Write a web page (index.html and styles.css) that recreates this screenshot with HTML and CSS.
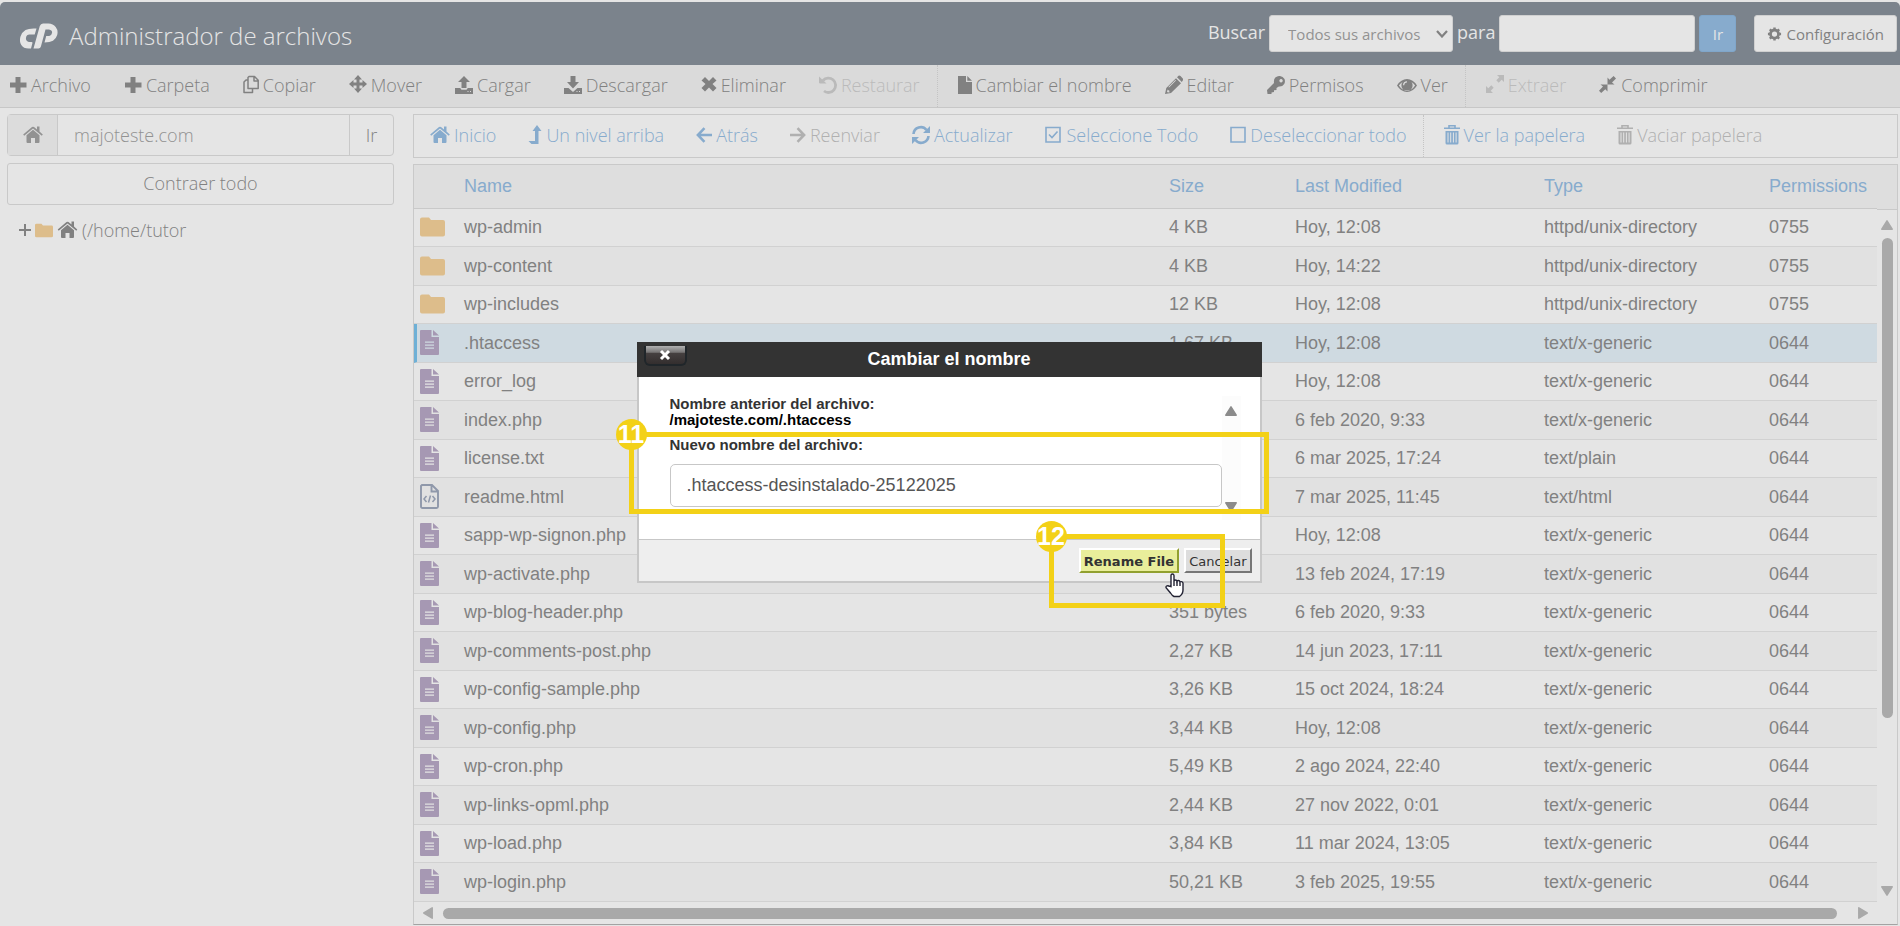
FILE: index.html
```
<!DOCTYPE html>
<html lang="es">
<head>
  <meta charset="UTF-8">
  <meta name="viewport" content="width=device-width, initial-scale=1">
  <title>Administrador de archivos</title>
  <link rel="stylesheet" href="styles.css">
</head>
<body>

  <!-- Iconos compartidos -->
  <svg class="sprite" aria-hidden="true">
    <symbol id="i-plus" viewBox="0 0 18 20"><path d="M6.500 2h5v5.500H17.500v5H11.500V18h-5v-5.500H1v-5h5.500z"/></symbol>
    <symbol id="i-copy" viewBox="0 0 16 20"><path d="M6 1.500h5.500l3.700 3.700V13.500H5V2.500zM11 1.500V6h4.200M5 5H3L1 7v10.500h8.500v-4" fill="none" stroke="currentColor" stroke-width="1.500" stroke-linejoin="round"/></symbol>
    <symbol id="i-move" viewBox="0 0 18 20"><path d="M9 0l4 4.500h-2.500V7.500h3V5L18 9l-4.500 4v-2.500h-3v3H13L9 18l-4-4.500h2.500v-3h-3V13L0 9l4.500-4v2.500h3v-3H5z"/></symbol>
    <symbol id="i-upload" viewBox="0 0 18 20"><path d="M9 1l6 6h-3.500v6h-5V7H3zM0 13h5.200l1.300 1.800h5L12.800 13H18v6H0zM12.500 16v1h1v-1zM15 16v1h1v-1z" fill-rule="evenodd"/></symbol>
    <symbol id="i-download" viewBox="0 0 18 20"><path d="M6.500 1h5v6H15l-6 6.500L3 7h3.500zM0 13h4.500L9 17l4.500-4H18v6H0zM12.500 16v1h1v-1zM15 16v1h1v-1z" fill-rule="evenodd"/></symbol>
    <symbol id="i-times" viewBox="0 0 16 20"><path d="M4 2l4 4 4-4 3.500 3.500L11.500 9l4 4-3.500 3.500-4-4-4 4L.5 13l4-4-4-3.500z"/></symbol>
    <symbol id="i-undo" viewBox="0 0 18 20"><path d="M4 5.500a7.200 7.200 0 1 1 1 10.500" fill="none" stroke="currentColor" stroke-width="2.800"/><path d="M0 1.500l7.500 7H.8L0 7.700z"/></symbol>
    <symbol id="i-file" viewBox="0 0 14 20"><path d="M0 1h8v6h6v12H0zM9.300 1L14 5.700H9.300z"/></symbol>
    <symbol id="i-pencil" viewBox="0 0 18 20"><path d="M0 19l1.300-6L11 3.300l5 5L6 18zM12 2.300l1.500-1.500q1-.6 2 .2l2.300 2.400q.8 1 0 2L16.800 7zM2.600 14l-.6 2.800.9.800 2.800-.7-1.500-.1v-1.500H2.700zM4 12.500l7-7-.6-.5-7 7z" fill-rule="evenodd"/></symbol>
    <symbol id="i-key" viewBox="0 0 18 20"><path d="M8.300 2.500Q10.500.5 13 1q3 .5 4.500 3 1 2.500-.3 5-2 3-5.400 2.500L9.500 13v2L7 15.300V17l-2.500.5V19H.5L0 15l7-7q-.5-3.500 1.300-5.500zM14 4a1.700 1.700 0 1 0 .1 0z" fill-rule="evenodd"/></symbol>
    <symbol id="i-eye" viewBox="0 0 20 20"><path d="M0 10.500Q4 4 10 4t10 6.500Q16 17 10 17T0 10.500zM1.900 10.500Q5 15.400 10 15.400t8.100-4.900Q17 8.500 14.500 7a5.600 5.600 0 1 1-9 0Q3 8.500 1.900 10.500zM10 6.300a4 4 0 0 0-4 3.900h1.300A2.800 2.800 0 0 1 10 7.500z" fill-rule="evenodd"/></symbol>
    <symbol id="i-expand" viewBox="0 0 18 20"><path d="M11 0h7v7l-2.300-2.300-3 3-2.400-2.400 3-3zM0 18v-7l2.300 2.300 3-3 2.400 2.400-3 3L7 18z"/></symbol>
    <symbol id="i-compress" viewBox="0 0 18 20"><path d="M8.500 9.500v-7l2 2.200L14.600 1 17 3.400 13 7.500l2.500 2zM8.500 9.500v7L6.300 14.300 2.200 18 0 15.800l4-4.200-2.500-2.100z"/></symbol>
    <symbol id="i-home" viewBox="0 0 20 20"><path d="M10 4.800l6.500 5.500V17q0 1-1 1H12v-5H8v5H4.500q-1 0-1-1v-6.700zM.2 9.500L9 2q1-.7 2 0l3 2.500V1.500h2.500v5l3.300 3-1 1.200L10 3.500l-8.800 7.200z"/></symbol>
    <symbol id="i-levelup" viewBox="0 0 13 20"><path d="M8.500 0l4.500 6h-3v13H3L0 16h6.500V6H4z"/></symbol>
    <symbol id="i-left" viewBox="0 0 17 20"><path d="M9 2.800L2 10l7 7.200M2 10h15" fill="none" stroke="currentColor" stroke-width="2.700"/></symbol>
    <symbol id="i-right" viewBox="0 0 17 20"><path d="M8 2.800L15 10l-7 7.200M15 10H0" fill="none" stroke="currentColor" stroke-width="2.700"/></symbol>
    <symbol id="i-refresh" viewBox="0 0 18 20"><path d="M1.500 9A7.300 7.300 0 0 1 14.500 5M16.500 11A7.300 7.300 0 0 1 3.500 15" fill="none" stroke="currentColor" stroke-width="2.600"/><path d="M18 1v7h-7zM0 19v-7h7z"/></symbol>
    <symbol id="i-checked" viewBox="0 0 16 20"><path d="M1 2.500h14v14.500H1zM4 9.500l3 3 5.500-6" fill="none" stroke="currentColor" stroke-width="1.600"/></symbol>
    <symbol id="i-unchecked" viewBox="0 0 16 20"><path d="M1 2.500h14v14.500H1z" fill="none" stroke="currentColor" stroke-width="1.600"/></symbol>
    <symbol id="i-trash" viewBox="0 0 16 20"><path d="M5 3V.8h6V3M0 3.300h16" fill="none" stroke="currentColor" stroke-width="1.600"/><path d="M1.500 6h13v12q0 1.500-1.500 1.500H3q-1.500 0-1.500-1.500zM3.500 7.500v10h1v-10zM6.200 7.500v10h1v-10zM8.900 7.500v10h1v-10zM11.600 7.500v10h1v-10z" fill-rule="evenodd"/></symbol>
    <symbol id="i-cog" viewBox="0 0 16 16"><circle cx="8" cy="8" r="4.300" fill="none" stroke="currentColor" stroke-width="3"/><path d="M8 1v2M8 13v2M1 8h2M13 8h2M3 3l1.500 1.500M11.500 11.500L13 13M13 3l-1.500 1.500M4.500 11.500L3 13" stroke="currentColor" stroke-width="2.600"/></symbol>
    <symbol id="i-folder" viewBox="0 0 25 20"><path d="M0 2.500Q0 .5 2 .5h7l2 2.500h12q2 0 2 2v12.500q0 2-2 2H2q-2 0-2-2z"/></symbol>
    <symbol id="i-doc" viewBox="0 0 19 25"><path d="M1 0h10.500v7H19v17q0 1-1 1H1q-1 0-1-1V1q0-1 1-1zM13 0l6 5.500h-6zM5 11.500v1.300h9v-1.300zM5 14.500v1.300h9v-1.300zM5 17.500v1.300h9v-1.300z" fill-rule="evenodd"/></symbol>
    <symbol id="i-html" viewBox="0 0 19 25"><path d="M2 1h10l6 6v15.500q0 1.500-1.500 1.500h-14Q1 24 1 22.500V2zM11.500 1v6.500H18" fill="none" stroke="currentColor" stroke-width="1.900"/><path d="M6.500 12L4 15l2.500 3M12.500 12l2.500 3-2.500 3M10.500 11.500l-2 7" fill="none" stroke="currentColor" stroke-width="1.500"/></symbol>
    <symbol id="i-tri" viewBox="0 0 12 10"><path d="M6 .8L11.200 9.200H.8z" stroke="currentColor" stroke-width="1.500" stroke-linejoin="round"/></symbol>
  </svg>

  <header class="topbar">
    <svg class="logo" viewBox="0 0 38 26" role="img" aria-label="cPanel">
      <path d="M16.500 5.500L14.700 11.500H9.500q-3 0-3.500 3.300T9 19h2.500q1.300 0 .9 1.200L11 25.500H8.500Q3.500 25.500 1.300 22T.5 13.500Q2 9 5.500 7t11-1.500z"/>
      <path d="M13.500 25.500L19.800 3Q20.700.5 23 .5h5.500Q33 .5 35.700 4t1.500 8q-1.200 4-4.200 5.700t-8.500 1.800L26.200 13h3q2.300-.2 2.800-3t-3-3.500h-3.500l-4.600 17q-.6 2-2.400 2z"/>
    </svg>
    <h1 class="title">Administrador de archivos</h1>
    <form class="search">
      <label for="search-scope">Buscar</label>
      <span class="select-wrap">
        <select id="search-scope">
          <option>Todos sus archivos</option>
        </select>
        <svg class="chevron" viewBox="0 0 12 8"><path d="M1 1l5 5.500L11 1" fill="none" stroke="currentColor" stroke-width="2.200"/></svg>
      </span>
      <label for="search-text">para</label>
      <input type="text" id="search-text">
      <button type="button" class="btn-go">Ir</button>
      <button type="button" class="btn-config"><svg class="icon-cog"><use href="#i-cog"/></svg>Configuración</button>
    </form>
  </header>

  <nav class="toolbar main-toolbar">
    <a href="#"><svg class="icon"><use href="#i-plus"/></svg>Archivo</a>
    <a href="#"><svg class="icon"><use href="#i-plus"/></svg>Carpeta</a>
    <a href="#"><svg class="icon icon-s"><use href="#i-copy"/></svg>Copiar</a>
    <a href="#"><svg class="icon"><use href="#i-move"/></svg>Mover</a>
    <a href="#"><svg class="icon"><use href="#i-upload"/></svg>Cargar</a>
    <a href="#"><svg class="icon"><use href="#i-download"/></svg>Descargar</a>
    <a href="#"><svg class="icon icon-s"><use href="#i-times"/></svg>Eliminar</a>
    <a href="#" class="disabled"><svg class="icon"><use href="#i-undo"/></svg>Restaurar</a>
    <a href="#" class="group"><svg class="icon icon-xs"><use href="#i-file"/></svg>Cambiar el nombre</a>
    <a href="#"><svg class="icon"><use href="#i-pencil"/></svg>Editar</a>
    <a href="#"><svg class="icon"><use href="#i-key"/></svg>Permisos</a>
    <a href="#"><svg class="icon icon-l"><use href="#i-eye"/></svg>Ver</a>
    <a href="#" class="group disabled"><svg class="icon"><use href="#i-expand"/></svg>Extraer</a>
    <a href="#"><svg class="icon"><use href="#i-compress"/></svg>Comprimir</a>
  </nav>

  <main class="content">
    <aside class="sidebar">
      <form class="path">
        <label for="path-input" class="path-home"><svg class="icon icon-l"><use href="#i-home"/></svg></label>
        <input type="text" id="path-input" value="majoteste.com">
        <button type="button">Ir</button>
      </form>
      <button type="button" class="btn-collapse">Contraer todo</button>
      <div class="tree">
        <svg class="tree-plus" viewBox="0 0 12 12"><path d="M6 0v12M0 6h12" stroke="currentColor" stroke-width="2"/></svg>
        <svg class="tree-folder"><use href="#i-folder"/></svg>
        <svg class="tree-home"><use href="#i-home"/></svg>
        <a href="#">(/home/tutor</a>
      </div>
    </aside>

    <section class="files">
      <nav class="toolbar nav-toolbar">
        <a href="#"><svg class="icon icon-l"><use href="#i-home"/></svg>Inicio</a>
        <a href="#"><svg class="icon icon-xs"><use href="#i-levelup"/></svg>Un nivel arriba</a>
        <a href="#"><svg class="icon icon-s"><use href="#i-left"/></svg>Atrás</a>
        <a href="#" class="disabled"><svg class="icon icon-s"><use href="#i-right"/></svg>Reenviar</a>
        <a href="#"><svg class="icon"><use href="#i-refresh"/></svg>Actualizar</a>
        <a href="#"><svg class="icon"><use href="#i-checked"/></svg>Seleccione Todo</a>
        <a href="#"><svg class="icon icon-s"><use href="#i-unchecked"/></svg>Deseleccionar todo</a>
        <a href="#" class="group"><svg class="icon icon-s"><use href="#i-trash"/></svg>Ver la papelera</a>
        <a href="#" class="disabled"><svg class="icon icon-s"><use href="#i-trash"/></svg>Vaciar papelera</a>
      </nav>

      <div class="list">
        <div class="list-main">
          <table>
            <colgroup>
              <col class="col-icon"><col><col class="col-size"><col class="col-date"><col class="col-type"><col class="col-perm">
            </colgroup>
            <thead>
              <tr><th></th><th>Name</th><th>Size</th><th>Last Modified</th><th>Type</th><th>Permissions</th></tr>
            </thead>
            <tbody id="file-rows"></tbody>
          </table>
          <div class="scroll-y">
            <svg class="arrow"><use href="#i-tri"/></svg>
            <div class="track-y"><div class="thumb-y"></div></div>
            <svg class="arrow down"><use href="#i-tri"/></svg>
          </div>
        </div>
        <div class="scroll-x">
          <svg class="arrow left"><use href="#i-tri"/></svg>
          <div class="thumb-x"></div>
          <svg class="arrow right"><use href="#i-tri"/></svg>
        </div>
      </div>
    </section>
  </main>

  <!-- Ventana para cambiar el nombre -->
  <div class="overlay">
    <div class="dialog" role="dialog" aria-labelledby="dialog-title">
      <div class="dialog-header">
        <button type="button" class="dialog-close" aria-label="Cerrar"><svg viewBox="0 0 12 12"><path d="M2 2l8 8M10 2l-8 8" stroke="currentColor" stroke-width="3"/></svg></button>
        <h2 id="dialog-title">Cambiar el nombre</h2>
      </div>
      <div class="dialog-body">
        <div class="dialog-form">
          <p>Nombre anterior del archivo:</p>
          <p class="old-name">/majoteste.com/.htaccess</p>
          <label for="new-name">Nuevo nombre del archivo:</label>
          <input type="text" id="new-name" value=".htaccess-desinstalado-25122025">
        </div>
        <div class="dialog-scroll">
          <svg class="arrow"><use href="#i-tri"/></svg>
          <svg class="arrow down"><use href="#i-tri"/></svg>
        </div>
      </div>
      <div class="dialog-footer">
        <button type="button" class="btn-rename">Rename File</button>
        <button type="button" class="btn-cancel">Cancelar</button>
      </div>

      <!-- Pasos de la guía -->
      <div class="mark mark-11"><span class="step">11</span></div>
      <div class="mark mark-12"><span class="step">12</span></div>
      <svg class="cursor" viewBox="0 0 19 25"><path d="M6 13.500V2.500Q6 1 7.400 1T9 2.500V8q.3-1 1.500-1T12 8.300q.3-.8 1.500-.8T15 9q.4-.5 1.400-.4T18 10v7q0 4-3.500 6.500H9Q7 22.500 5.500 20L1.200 15q-.6-1.400.4-2t2.200 0z" fill="#fff" stroke="#223" stroke-width="1.400"/><path d="M9 8v5M12 8.500V13M15 9.500V13" stroke="#223" stroke-width="1.400"/></svg>
    </div>
  </div>

  <script>
    // [icono, nombre, tamaño, modificado, tipo, permisos]
    const files = [
      ['folder', 'wp-admin', '4 KB', 'Hoy, 12:08', 'httpd/unix-directory', '0755'],
      ['folder', 'wp-content', '4 KB', 'Hoy, 14:22', 'httpd/unix-directory', '0755'],
      ['folder', 'wp-includes', '12 KB', 'Hoy, 12:08', 'httpd/unix-directory', '0755'],
      ['doc', '.htaccess', '1,67 KB', 'Hoy, 12:08', 'text/x-generic', '0644'],
      ['doc', 'error_log', '', 'Hoy, 12:08', 'text/x-generic', '0644'],
      ['doc', 'index.php', '', '6 feb 2020, 9:33', 'text/x-generic', '0644'],
      ['doc', 'license.txt', '', '6 mar 2025, 17:24', 'text/plain', '0644'],
      ['html', 'readme.html', '', '7 mar 2025, 11:45', 'text/html', '0644'],
      ['doc', 'sapp-wp-signon.php', '', 'Hoy, 12:08', 'text/x-generic', '0644'],
      ['doc', 'wp-activate.php', '', '13 feb 2024, 17:19', 'text/x-generic', '0644'],
      ['doc', 'wp-blog-header.php', '351 bytes', '6 feb 2020, 9:33', 'text/x-generic', '0644'],
      ['doc', 'wp-comments-post.php', '2,27 KB', '14 jun 2023, 17:11', 'text/x-generic', '0644'],
      ['doc', 'wp-config-sample.php', '3,26 KB', '15 oct 2024, 18:24', 'text/x-generic', '0644'],
      ['doc', 'wp-config.php', '3,44 KB', 'Hoy, 12:08', 'text/x-generic', '0644'],
      ['doc', 'wp-cron.php', '5,49 KB', '2 ago 2024, 22:40', 'text/x-generic', '0644'],
      ['doc', 'wp-links-opml.php', '2,44 KB', '27 nov 2022, 0:01', 'text/x-generic', '0644'],
      ['doc', 'wp-load.php', '3,84 KB', '11 mar 2024, 13:05', 'text/x-generic', '0644'],
      ['doc', 'wp-login.php', '50,21 KB', '3 feb 2025, 19:55', 'text/x-generic', '0644'],
    ];
    const selected = '.htaccess';

    document.getElementById('file-rows').innerHTML = files.map(([icon, name, ...cells]) => `
      <tr class="${name === selected ? 'selected' : ''}">
        <td><svg class="type-${icon}"><use href="#i-${icon}"/></svg></td>
        <td>${name}</td>
        ${cells.map(cell => `<td>${cell}</td>`).join('')}
      </tr>`).join('');
  </script>

</body>
</html>
```

FILE: styles.css
```
* {
  box-sizing: border-box;
}

body {
  margin: 0;
  min-height: 100vh;
  padding-top: 2px;
  background-color: #e5e5e5;
  color: #818181;
  font-family: "Open Sans", sans-serif;
  font-size: 18px;
  line-height: 24px;
}

h1, h2, p {
  margin: 0;
}

svg {
  fill: currentColor;
}

button, input, select {
  margin: 0;
  color: inherit;
  font: inherit;
}

a {
  color: inherit;
  text-decoration: none;
}

.sprite {
  display: none;
}

/* Cabecera */
.topbar {
  display: flex;
  align-items: center;
  height: 63px;
  padding: 0 3px 0 20px;
  background-color: #7b838c;
  color: #e5e5e5;
  border-radius: 5px 5px 0 0;
}

.logo {
  width: 38px;
  height: 26px;
  margin-top: 4px;
}

.title {
  flex: 1;
  padding: 4px 0 0 11px;
  font-size: 24px;
  font-weight: 300;
}

.search {
  display: flex;
  align-items: center;
  gap: 4px;
}

.search label {
  padding-bottom: 4px;
}

.search select,
.search input,
.search button {
  height: 37px;
  border: 1px solid #d0d0d0;
  border-radius: 3px;
  background-color: #e5e5e5;
  color: #818181;
  font-size: 15px;
}

.select-wrap {
  position: relative;
}

.search select {
  display: block;
  width: 184px;
  padding: 0 18px;
  appearance: none;
  color: #929292;
}

.chevron {
  position: absolute;
  right: 5px;
  top: 15px;
  width: 12px;
  height: 8px;
  color: #818181;
}

.search input {
  width: 196px;
}

.search .btn-go {
  width: 37px;
  padding: 0;
  background-color: #87abcd;
  border-color: #80a6ca;
  color: #e5e5e5;
}

.search .btn-config {
  display: flex;
  align-items: center;
  gap: 4px;
  margin-left: 14px;
  padding: 0 12px;
}

.icon-cog {
  width: 15px;
  height: 16px;
}

/* Barras de herramientas */
.toolbar {
  display: flex;
  font-weight: 300;
  white-space: nowrap;
}

.toolbar a {
  display: flex;
  align-items: center;
  gap: 4px;
  padding: 0 16px 2px;
}

.toolbar .group {
  border-left: 1px dotted #c4c4c4;
  padding-left: 20px;
}

.icon {
  width: 18px;
  height: 20px;
}

.icon-xs {
  width: 14px;
}

.icon-s {
  width: 16px;
}

.icon-l {
  width: 20px;
}

.main-toolbar {
  gap: 1px;
  height: 43px;
  background-color: #dadada;
  border-bottom: 1px solid #c7c7c7;
}

.main-toolbar a:first-child {
  padding-left: 9px;
}

.main-toolbar .disabled {
  color: #bababa;
}

.nav-toolbar {
  height: 44px;
  border: 1px solid #c9c9c9;
  color: #87abcd;
}

.nav-toolbar .disabled {
  color: #b0b0b0;
}

/* Contenido */
.content {
  display: flex;
  align-items: flex-start;
  gap: 19px;
  padding: 6px 2px 0 7px;
}

.sidebar {
  width: 387px;
}

.path {
  display: flex;
  height: 42px;
  border: 1px solid #c9c9c9;
  border-radius: 4px;
}

.path-home {
  display: flex;
  align-items: center;
  justify-content: center;
  width: 50px;
  background-color: #dcdcdc;
  color: #929292;
  border-right: 1px solid #c9c9c9;
}

.path input {
  flex: 1;
  min-width: 0;
  padding: 0 16px;
  border: 0;
  background: none;
  color: #929292;
  font-weight: 300;
}

.path button {
  width: 44px;
  border: 0;
  border-left: 1px solid #c9c9c9;
  background: none;
  font-weight: 300;
}

.btn-collapse {
  display: block;
  width: 100%;
  height: 42px;
  margin-top: 7px;
  padding-bottom: 3px;
  border: 1px solid #c9c9c9;
  border-radius: 3px;
  background: none;
  font-weight: 300;
}

.tree {
  display: flex;
  align-items: center;
  gap: 4px;
  padding: 13px 12px;
  font-weight: 300;
}

.tree-plus {
  width: 12px;
  height: 12px;
}

.tree-folder {
  width: 18px;
  height: 15px;
  color: #ddbd8b;
}

.tree-home {
  width: 21px;
  height: 20px;
}

.files {
  flex: 1;
  min-width: 0;
}

/* Lista de archivos */
.list {
  margin-top: 6px;
  border: 1px solid #c9c9c9;
  border-bottom-color: #a3a3a3;
  font-family: "Liberation Sans", Arial, sans-serif;
}

.list-main {
  display: flex;
}

table {
  flex: 1;
  border-collapse: separate;
  border-spacing: 0;
  table-layout: fixed;
  width: 0;
  line-height: 20px;
}

th, td {
  padding: 0;
  text-align: left;
  vertical-align: middle;
  white-space: nowrap;
}

th {
  height: 44px;
  padding-bottom: 2px;
  background-color: #dedede;
  border-bottom: 1px solid #c9c9c9;
  color: #87abcd;
  font-weight: 400;
}

td {
  height: 38px;
  padding-bottom: 1px;
  border-bottom: 1px solid #d1d1d1;
}

td:first-child {
  padding-left: 6px;
}

tbody tr:nth-child(even) td {
  height: 39px;
  background-color: #e1e1e1;
}

tbody tr.selected td {
  background-color: #cfdae1;
}

tbody tr.selected td:first-child {
  border-left: 3px solid #6eb0d6;
  padding-left: 3px;
}

td svg {
  display: block;
}

.col-icon {
  width: 50px;
}

.col-size {
  width: 126px;
}

.col-date {
  width: 249px;
}

.col-type {
  width: 225px;
}

.col-perm {
  width: 108px;
}

.type-folder {
  width: 25px;
  height: 20px;
  color: #ddbd8b;
}

.type-doc, .type-html {
  width: 19px;
  height: 25px;
  color: #a698b3;
}

.type-html {
  color: #8f98aa;
}

/* Barras de desplazamiento */
.scroll-y {
  display: flex;
  flex-direction: column;
  align-items: center;
  width: 20px;
  padding-bottom: 6px;
}

.scroll-y::before {
  content: "";
  width: 100%;
  height: 44px;
  margin-bottom: 10px;
  background-color: #dedede;
  border-bottom: 1px solid #c9c9c9;
}

.arrow {
  width: 12px;
  height: 10px;
  color: #a9a9a9;
}

.down {
  transform: rotate(180deg);
}

.left {
  transform: rotate(-90deg);
}

.right {
  transform: rotate(90deg);
}

.track-y {
  flex: 1;
  padding: 8px 0;
}

.thumb-y {
  width: 11px;
  height: 75%;
  border-radius: 6px;
  background-color: #a9a9a9;
}

.scroll-x {
  display: flex;
  align-items: center;
  gap: 9px;
  height: 22px;
  padding: 0 28px 0 8px;
}

.thumb-x {
  flex: 1;
  height: 11px;
  margin-right: 11px;
  border-radius: 6px;
  background-color: #a9a9a9;
}

/* Ventana */
.overlay {
  position: absolute;
  top: 342px;
  left: 0;
  right: 2px;
  display: flex;
  justify-content: center;
}

.dialog {
  position: relative;
  width: 625px;
  font-family: "Liberation Sans", Arial, sans-serif;
}

.dialog-header {
  position: relative;
  padding: 5px 0 6px;
  background-color: #333333;
  color: #ffffff;
  text-align: center;
}

.dialog-header h2 {
  font-size: 18px;
  font-weight: 700;
}

.dialog-close {
  position: absolute;
  top: 4px;
  left: 7px;
  display: flex;
  align-items: center;
  justify-content: center;
  width: 43px;
  height: 20px;
  padding: 0;
  border: 2px solid #20262a;
  border-top: 0;
  border-radius: 0 0 6px 6px;
  background: linear-gradient(#b0b0b0, #767474 35%, #454040 40%, #332e2e);
  color: #ffffff;
}

.dialog-close svg {
  width: 12px;
  height: 12px;
}

.dialog-body {
  display: flex;
  padding: 19px;
  padding-left: 31px;
  background-color: #ffffff;
  border: solid #c7c7c7;
  border-width: 0 2px 1px;
}

.dialog-form {
  flex: 1;
  color: #333333;
  font-size: 15px;
  font-weight: 700;
  line-height: 16px;
}

.old-name {
  color: #000000;
}

.dialog-form label {
  display: block;
  padding-top: 9px;
}

.dialog-form input {
  display: block;
  width: 100%;
  height: 43px;
  margin-top: 11px;
  padding: 0 16px;
  border: 1px solid #c7c7c7;
  border-radius: 5px;
  color: #555555;
  font-size: 18px;
  font-weight: 400;
}

.dialog-scroll {
  display: flex;
  flex-direction: column;
  align-items: center;
  justify-content: space-between;
  width: 19px;
  height: 124px;
  padding: 10px 0 8px;
  background-color: #fcfcfc;
}

.dialog-scroll .arrow {
  color: #8b8b8b;
}

.dialog-footer {
  display: flex;
  justify-content: flex-end;
  gap: 5px;
  padding: 8px;
  background-color: #eeeeee;
  border: 2px solid #c7c7c7;
  border-top: 0;
  font-family: "DejaVu Sans", Verdana, sans-serif;
  font-size: 13px;
}

.dialog-footer button {
  height: 25px;
  padding: 0 3px;
  border: 2px solid;
  color: #333333;
}

.dialog-footer .btn-rename {
  background-color: #e9ee9b;
  border-color: #ffffff #91a030 #91a030 #ffffff;
  font-weight: 700;
}

.dialog-footer .btn-cancel {
  background-color: #dddddd;
  border-color: #ffffff #777777 #777777 #ffffff;
}

/* Marcas de los pasos */
.mark {
  position: absolute;
  border: 5px solid #f3d117;
}

.mark-11 {
  top: 90px;
  left: -8px;
  width: 640px;
  height: 82px;
}

.mark-12 {
  top: 192px;
  left: 412px;
  width: 176px;
  height: 74px;
}

.step {
  position: absolute;
  top: -18px;
  left: -18px;
  width: 31px;
  height: 31px;
  border-radius: 50%;
  background-color: #f3d117;
  color: #ffffff;
  font-size: 25px;
  font-weight: 700;
  line-height: 31px;
  text-align: center;
}

.cursor {
  position: absolute;
  top: 231px;
  left: 528px;
  width: 19px;
  height: 25px;
}
```
